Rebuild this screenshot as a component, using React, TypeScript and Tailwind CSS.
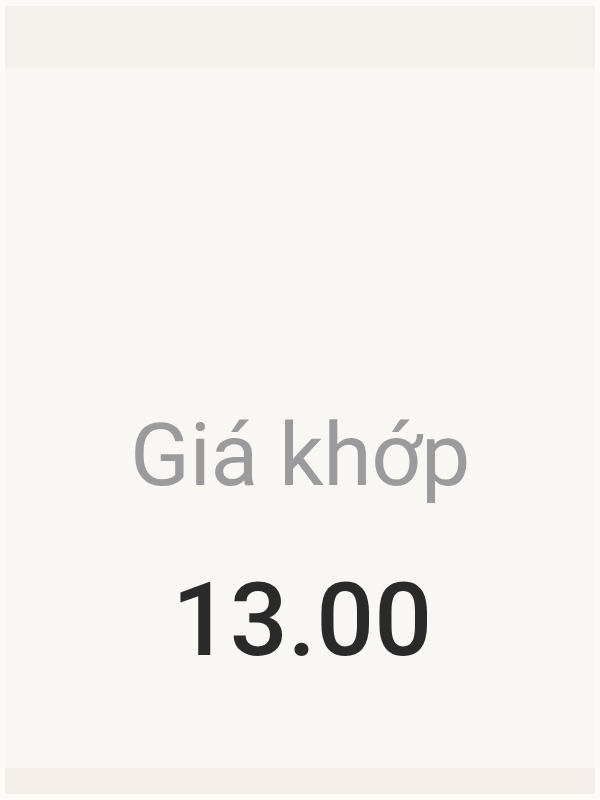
export default function App() {
  return (
    <div className="w-[600px] h-[800px] bg-[#fcfbf8] px-[5px] py-[6px] flex flex-col" style={{ fontFamily: 'Roboto, "Noto Sans", sans-serif' }}>
      <div className="h-[62px] bg-[#f4f0eb] shrink-0" />
      <div className="flex-1 bg-[#f8f7f3] flex flex-col items-center">
        <div className="mt-[343px] text-[88px] leading-[88px] text-[#9b9b9d] tracking-[-0.5px]">Giá khớp</div>
        <div className="mt-[70px] text-[102px] leading-[102px] font-medium text-[#2a2a2a] pl-[4px]">13.00</div>
      </div>
      <div className="h-[26px] bg-[#f5efea] shrink-0" />
    </div>
  )
}
